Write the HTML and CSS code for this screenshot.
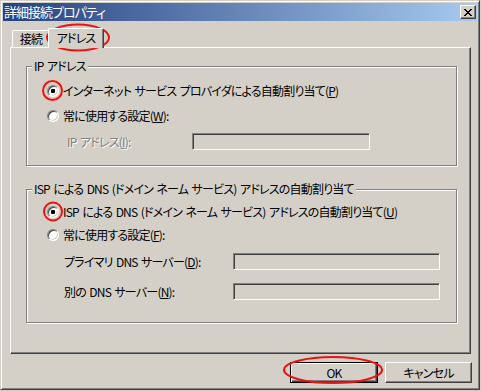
FILE: index.html
```html
<!DOCTYPE html>
<html lang="ja">
<head>
    <meta charset="UTF-8">
    <title>詳細接続プロパティ</title>
    <link rel="stylesheet" href="styles.css">
</head>
<body>
    <div class="window">
        <div class="titlebar">
            <span class="title">詳細接続プロパティ</span>
            <span class="close-btn">
                <svg width="8" height="7" viewBox="0 0 8 7" shape-rendering="crispEdges">
                    <path fill="#000" d="M0 0h2v1h-2zM6 0h2v1h-2zM1 1h2v1h-2zM5 1h2v1h-2zM2 2h4v1h-4zM3 3h2v1h-2zM2 4h4v1h-4zM1 5h2v1h-2zM5 5h2v1h-2zM0 6h2v1h-2zM6 6h2v1h-2z"/>
                </svg>
            </span>
        </div>

        <div class="tabs">
            <div class="tab first">接続</div>
            <div class="tab active">アドレス</div>
        </div>

        <div class="panel">
            <fieldset class="group group-ip">
                <legend>IP アドレス</legend>
                <div class="rows">
                    <div class="row r-first"><span class="radio checked"></span>インターネット サービス プロバイダによる自動割り当て(<u>P</u>)</div>
                    <div class="row r-next"><span class="radio"></span>常に使用する設定(<u>W</u>):</div>
                    <div class="row field r-next">
                        <span class="label disabled ip-label">IP アドレス(<u>I</u>):</span>
                        <span class="edit ip-edit"></span>
                    </div>
                </div>
            </fieldset>

            <fieldset class="group group-dns">
                <legend>ISP による DNS (ドメイン ネーム サービス) アドレスの自動割り当て</legend>
                <div class="rows">
                    <div class="row d-first"><span class="radio checked"></span>ISP による DNS (ドメイン ネーム サービス) アドレスの自動割り当て(<u>U</u>)</div>
                    <div class="row d-second"><span class="radio"></span>常に使用する設定(<u>F</u>):</div>
                    <div class="row field d-third">
                        <span class="label dns-label">プライマリ DNS サーバー(<u>D</u>):</span>
                        <span class="edit dns-edit"></span>
                    </div>
                    <div class="row field d-fourth">
                        <span class="label dns-label">別の DNS サーバー(<u>N</u>):</span>
                        <span class="edit dns-edit"></span>
                    </div>
                </div>
            </fieldset>
        </div>

        <div class="buttons">
            <div class="btn default">OK</div>
            <div class="btn">キャンセル</div>
        </div>

        <svg class="marks" width="481" height="391" viewBox="0 0 481 391">
            <g fill="none" stroke="#ee1111" stroke-width="2">
                <ellipse cx="78" cy="37.5" rx="31" ry="13"/>
                <circle cx="52.5" cy="90.5" r="9.5"/>
                <circle cx="53" cy="211.5" r="9"/>
                <ellipse cx="333" cy="370" rx="49" ry="13"/>
            </g>
        </svg>
    </div>
</body>
</html>
```

FILE: styles.css
```css
body {
    margin: 0;
    background-color: #d4d0c8;
    font-family: "Noto Sans CJK JP", "Liberation Sans", sans-serif;
    font-size: 12px;
    line-height: 14px;
    letter-spacing: -0.8px;
    word-spacing: 1.5px;
    font-feature-settings: "palt";
    color: #000;
}
.window {
    position: relative;
    box-sizing: border-box;
    width: 480px;
    height: 390px;
    padding: 2px;
    border: 1px solid;
    border-color: #d4d0c8 #404040 #404040 #d4d0c8;
    box-shadow: inset 1px 1px 0 #fff, inset -1px -1px 0 #808080;
    display: flex;
    flex-direction: column;
}
.titlebar {
    height: 18px;
    display: flex;
    align-items: center;
    justify-content: space-between;
    background: linear-gradient(to right, #27427f, #a6caf0);
    padding: 0 1px 0 1px;
}
.title {
    color: #fff;
    font-size: 13px;
    letter-spacing: -1px;
}
.close-btn {
    box-sizing: border-box;
    width: 16px;
    height: 14px;
    display: flex;
    align-items: center;
    justify-content: center;
    background-color: #d4d0c8;
    border: 1px solid;
    border-color: #fff #404040 #404040 #fff;
    box-shadow: inset -1px -1px 0 #808080;
}
.tabs {
    height: 26px;
    display: flex;
    align-items: flex-end;
    padding-left: 9px;
}
.tab {
    box-sizing: border-box;
    height: 17px;
    padding-top: 1px;
    text-align: center;
    border: 1px solid;
    border-bottom: none;
    border-color: #fff #404040 #404040 #fff;
    border-radius: 2px 2px 0 0;
    box-shadow: inset -1px 0 0 #808080;
}
.tab.first {
    width: 38px;
}
.tab.active {
    position: relative;
    z-index: 1;
    width: 56px;
    height: 20px;
    margin-left: -2px;
    margin-bottom: -1px;
    padding-top: 2px;
    background-color: #d4d0c8;
}
.panel {
    box-sizing: border-box;
    height: 307px;
    margin: 0 6px 0 7px;
    border: 1px solid;
    border-color: #fff #404040 #404040 #fff;
    box-shadow: inset -1px -1px 0 #808080;
    padding-top: 11px;
}
.group {
    box-sizing: border-box;
    width: 431px;
    margin: 0 0 0 15px;
    padding: 0;
    min-width: 0;
    border: 1px solid #808080;
    box-shadow: inset 1px 1px 0 #fff, 1px 1px 0 #fff;
}
.group legend {
    margin-left: 5px;
    padding: 0 2px;
    background-color: #d4d0c8;
}
.group-ip {
    height: 107px;
}
.group-dns {
    height: 141px;
    margin-top: 16px;
}
.rows {
    display: flex;
    flex-direction: column;
    padding-left: 20px;
}
.row {
    height: 16px;
    display: flex;
    align-items: center;
    white-space: nowrap;
}
.row.field {
    height: 17px;
}
.r-first {
    margin-top: 10px;
}
.r-next {
    margin-top: 9px;
}
.d-first {
    margin-top: 8px;
}
.d-second {
    margin-top: 7px;
}
.d-third {
    margin-top: 10px;
}
.d-fourth {
    margin-top: 13px;
}
.radio {
    position: relative;
    box-sizing: border-box;
    flex: none;
    width: 12px;
    height: 12px;
    margin-right: 4px;
    border-radius: 50%;
    border: 1px solid;
    border-color: #808080 #fff #fff #808080;
    background-color: #fff;
    box-shadow: inset 1px 1px 0 #404040, inset -1px -1px 0 #d4d0c8;
}
.radio.checked::after {
    content: "";
    position: absolute;
    left: 3px;
    top: 3px;
    width: 4px;
    height: 4px;
    border-radius: 1px;
    background-color: #000;
}
.label {
    box-sizing: border-box;
    flex: none;
}
.ip-label {
    width: 145px;
    padding-left: 20px;
}
.dns-label {
    width: 186px;
    padding-left: 17px;
}
.disabled {
    color: #808080;
    text-shadow: 1px 1px 0 #fff;
}
.edit {
    box-sizing: border-box;
    flex: none;
    height: 17px;
    border: 1px solid;
    border-color: #808080 #fff #fff #808080;
    box-shadow: inset 1px 1px 0 #404040, inset -1px -1px 0 #d4d0c8;
    background-color: #d4d0c8;
}
.ip-edit {
    width: 178px;
}
.dns-edit {
    width: 207px;
}
.buttons {
    display: flex;
    justify-content: flex-end;
    gap: 7px;
    margin: 8px 5px 0 0;
}
.btn {
    box-sizing: border-box;
    width: 87px;
    height: 21px;
    display: flex;
    align-items: center;
    justify-content: center;
    border: 1px solid;
    border-color: #fff #404040 #404040 #fff;
    box-shadow: inset -1px -1px 0 #808080;
}
.btn.default {
    width: 88px;
    border-color: #000;
    box-shadow: inset 1px 1px 0 #fff, inset -1px -1px 0 #404040, inset -2px -2px 0 #808080;
}
.marks {
    position: absolute;
    left: -1px;
    top: -1px;
    pointer-events: none;
}
```
